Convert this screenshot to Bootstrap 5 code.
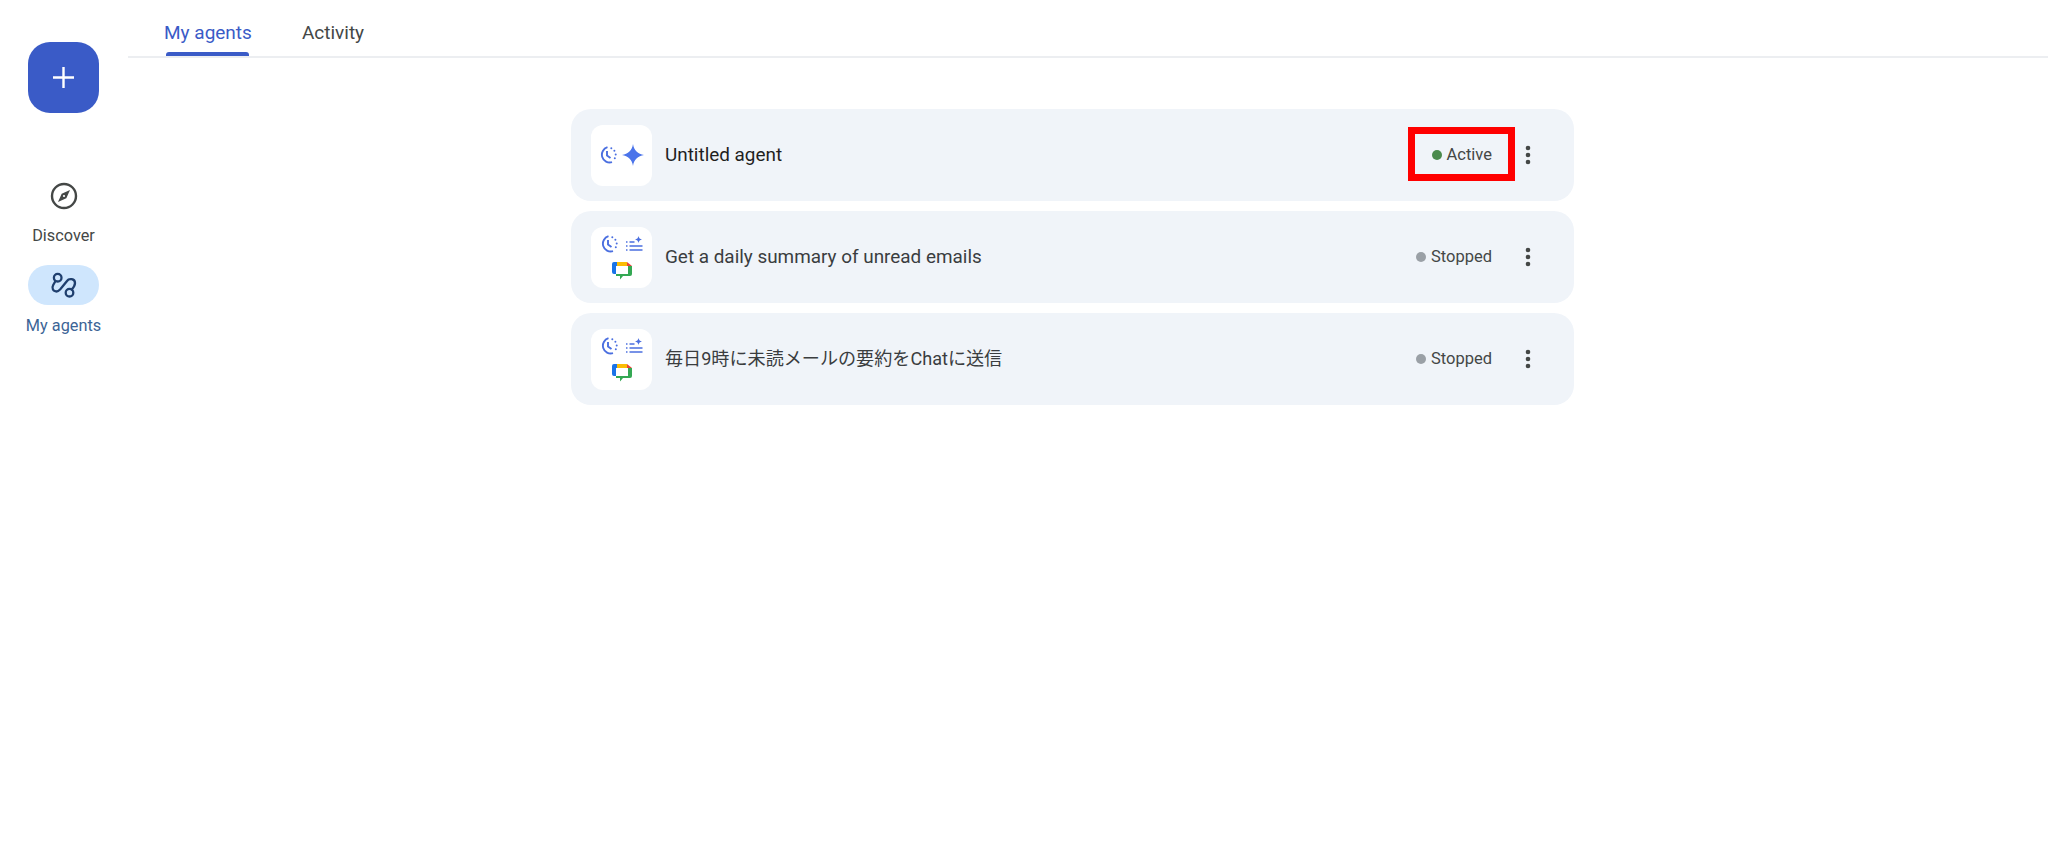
<!DOCTYPE html>
<html lang="en">
<head>
<meta charset="utf-8">
<title>My agents</title>
<link href="https://cdn.jsdelivr.net/npm/bootstrap@5.3.0/dist/css/bootstrap.min.css" rel="stylesheet">
<style>
body{font-family:Roboto,"Noto Sans CJK JP",sans-serif;background:#fff;color:#1f1f1f;height:857px;overflow:hidden}
.rail{width:127px;flex:none;padding-top:42px}
.fab{width:71px;height:71px;border-radius:22px;background:#3a5bc7;border:0;padding:0}
.rail-items{margin-top:63px}
.rail-link{width:127px;color:#444746;font-size:16.3px;line-height:20px;text-decoration:none}
.rail-ico{width:71px;height:40px;border-radius:20px}
.rail-on .rail-ico{background:#cfe6fd}
.rail-on{color:#3c6496;margin-top:19px}
.rail-link span{margin-top:10px}
.rail-on span{margin-top:11px}
.page-main{margin-left:1px}
.tabbar{height:58px;border-bottom:2px solid #eceef1;padding-left:36px;gap:50px}
.tabitem{height:56px;padding-top:20px;line-height:26px;font-size:19px;color:#444746;text-decoration:none;position:relative;display:block}
.tabitem-on{color:#3a5bc7}
.tabitem-on::after{content:"";position:absolute;left:2px;right:3px;bottom:0;height:4px;background:#3a5bc7;border-radius:3px 3px 0 0}
.agents{width:1003px;margin-left:443px;margin-top:51px;gap:10px}
.agent{height:92px;border-radius:20px;background:#f0f4f9;padding:0 26px 0 20px}
.tile{width:61px;height:61px;border-radius:12px;background:#fff;flex:none;margin-right:13px}
.tile-grid{display:grid;grid-template-columns:17px 17px;column-gap:9px;row-gap:9px;justify-items:center;align-items:center}
.tile-one{gap:5px}
.agent-name{font-size:18.9px;color:#1f1f1f;line-height:24px;margin-top:-1px}
.agent-muted{color:#3a3d3f;margin-top:0}
.agent-cjk{font-size:18.1px}
.status{font-size:16.5px;color:#444746;margin-right:16px;position:relative}
.dot{width:10px;height:10px;border-radius:50%;background:#9aa0a6;margin-right:5px}
.dot-on{background:#4a8a4d;margin-right:5px}
.redbox{position:absolute;left:-24px;right:-23px;top:-16px;bottom:-14px;border:7px solid #ff0000;pointer-events:none}
.kebab{width:40px;height:40px;border:0;background:none;padding:0}
.chat-span{grid-column:1 / span 2}
</style>
</head>
<body>
<svg width="0" height="0" class="d-block">
  <defs>
    <symbol id="ico-clock" viewBox="0 0 18 18">
      <g fill="none" stroke="#4b6fe0" stroke-width="1.900"><path d="M8.500 1.200A7.800 7.800 0 1 0 13 16.200"/><path d="M8 5v4.500l3.500 2.500"/></g>
      <g fill="#4b6fe0"><circle cx="12.300" cy="2.200" r="1"/><circle cx="15.400" cy="4.800" r="1"/><circle cx="16.700" cy="8.500" r="1"/><circle cx="15.800" cy="12.300" r="1"/></g>
    </symbol>
    <symbol id="ico-list" viewBox="0 0 17 16">
      <path d="M12.500 0c.3 2 1.500 3.200 3.500 3.500-2 .3-3.200 1.500-3.500 3.500-.3-2-1.500-3.200-3.500-3.500 2-.3 3.200-1.500 3.500-3.500z" fill="#4b6fe0"/>
      <path d="M3.500 6h5M3.500 10h13M3.500 14h13M0 6h1.500M0 10h1.500M0 14h1.500" stroke="#4b6fe0" stroke-width="1.600"/>
    </symbol>
    <symbol id="ico-chat" viewBox="0 0 20 18">
      <path d="M5 0h10v4H5z" fill="#fbbc04"/><path d="M15 0l5 4h-5z" fill="#ea4335"/>
      <path d="M5 0H2a2 2 0 0 0-2 2v8a2 2 0 0 0 2 2h2V4h1z" fill="#1a73e8"/>
      <path d="M16 4h4v8a2 2 0 0 1-2 2h-7l-3 3.500V14H4v-2h12z" fill="#34a853"/>
    </symbol>
    <symbol id="ico-more" viewBox="0 0 6 20">
      <g fill="#444746"><circle cx="3" cy="3" r="2.300"/><circle cx="3" cy="10" r="2.300"/><circle cx="3" cy="17" r="2.300"/></g>
    </symbol>
  </defs>
</svg>
<div class="d-flex">
  <nav class="rail d-flex flex-column align-items-center">
    <button class="fab d-flex align-items-center justify-content-center" aria-label="New">
      <svg width="21" height="21" viewBox="0 0 21 21"><path d="M10.500 0v21M0 10.500h21" stroke="#fff" stroke-width="2.400"/></svg>
    </button>
    <div class="rail-items d-flex flex-column align-items-center">
      <a class="rail-link d-flex flex-column align-items-center" href="#">
        <div class="rail-ico d-flex align-items-center justify-content-center">
          <svg width="28" height="28" viewBox="0 0 28 28"><circle cx="14" cy="14" r="12" fill="none" stroke="#444746" stroke-width="2.400"/><path d="M20 8 16.300 16.300 8 20 11.700 11.700z" fill="#444746"/><circle cx="14" cy="14" r="1.100" fill="#fff"/></svg>
        </div>
        <span>Discover</span>
      </a>
      <a class="rail-link rail-on d-flex flex-column align-items-center" href="#">
        <div class="rail-ico d-flex align-items-center justify-content-center">
          <svg width="28" height="28" viewBox="0 0 28 28" fill="none" stroke="#1f3f6e" stroke-width="2.300" stroke-linecap="round"><circle cx="7.700" cy="6.700" r="3.800"/><circle cx="19.500" cy="21.700" r="3.800"/><path d="M5.500 10 3.200 14C1.500 17 3 20.500 6.500 20.500 8.500 20.500 9.500 19 10.500 18L17 10C19 7 25 7.500 25 12 25 14 23.500 16.500 21.800 18.500"/></svg>
        </div>
        <span>My agents</span>
      </a>
    </div>
  </nav>
  <main class="page-main flex-grow-1">
    <div class="tabbar d-flex">
      <a class="tabitem tabitem-on" href="#">My agents</a>
      <a class="tabitem" href="#">Activity</a>
    </div>
    <div class="agents d-flex flex-column">
      <div class="agent d-flex align-items-center">
        <div class="tile tile-one d-flex align-items-center justify-content-center">
          <svg width="18" height="18"><use href="#ico-clock"/></svg>
          <svg width="22" height="22" viewBox="0 0 22 22"><path d="M11 0C11.800 6 16 10.200 22 11 16 11.800 11.800 16 11 22 10.200 16 6 11.800 0 11 6 10.200 10.200 6 11 0z" fill="#4b74ea"/></svg>
        </div>
        <div class="agent-name flex-grow-1">Untitled agent</div>
        <div class="status d-flex align-items-center"><span class="dot dot-on"></span>Active<span class="redbox"></span></div>
        <button class="kebab d-flex align-items-center justify-content-center" aria-label="More">
          <svg width="6" height="20"><use href="#ico-more"/></svg>
        </button>
      </div>
      <div class="agent d-flex align-items-center">
        <div class="tile tile-grid justify-content-center align-content-center">
          <svg width="18" height="18"><use href="#ico-clock"/></svg>
          <svg width="17" height="16"><use href="#ico-list"/></svg>
          <svg class="chat-span" width="20" height="18"><use href="#ico-chat"/></svg>
        </div>
        <div class="agent-name agent-muted flex-grow-1">Get a daily summary of unread emails</div>
        <div class="status d-flex align-items-center"><span class="dot"></span>Stopped</div>
        <button class="kebab d-flex align-items-center justify-content-center" aria-label="More">
          <svg width="6" height="20"><use href="#ico-more"/></svg>
        </button>
      </div>
      <div class="agent d-flex align-items-center">
        <div class="tile tile-grid justify-content-center align-content-center">
          <svg width="18" height="18"><use href="#ico-clock"/></svg>
          <svg width="17" height="16"><use href="#ico-list"/></svg>
          <svg class="chat-span" width="20" height="18"><use href="#ico-chat"/></svg>
        </div>
        <div class="agent-name agent-muted agent-cjk flex-grow-1">毎日9時に未読メールの要約をChatに送信</div>
        <div class="status d-flex align-items-center"><span class="dot"></span>Stopped</div>
        <button class="kebab d-flex align-items-center justify-content-center" aria-label="More">
          <svg width="6" height="20"><use href="#ico-more"/></svg>
        </button>
      </div>
    </div>
  </main>
</div>
<script src="https://cdn.jsdelivr.net/npm/bootstrap@5.3.0/dist/js/bootstrap.bundle.min.js"></script>
</body>
</html>
